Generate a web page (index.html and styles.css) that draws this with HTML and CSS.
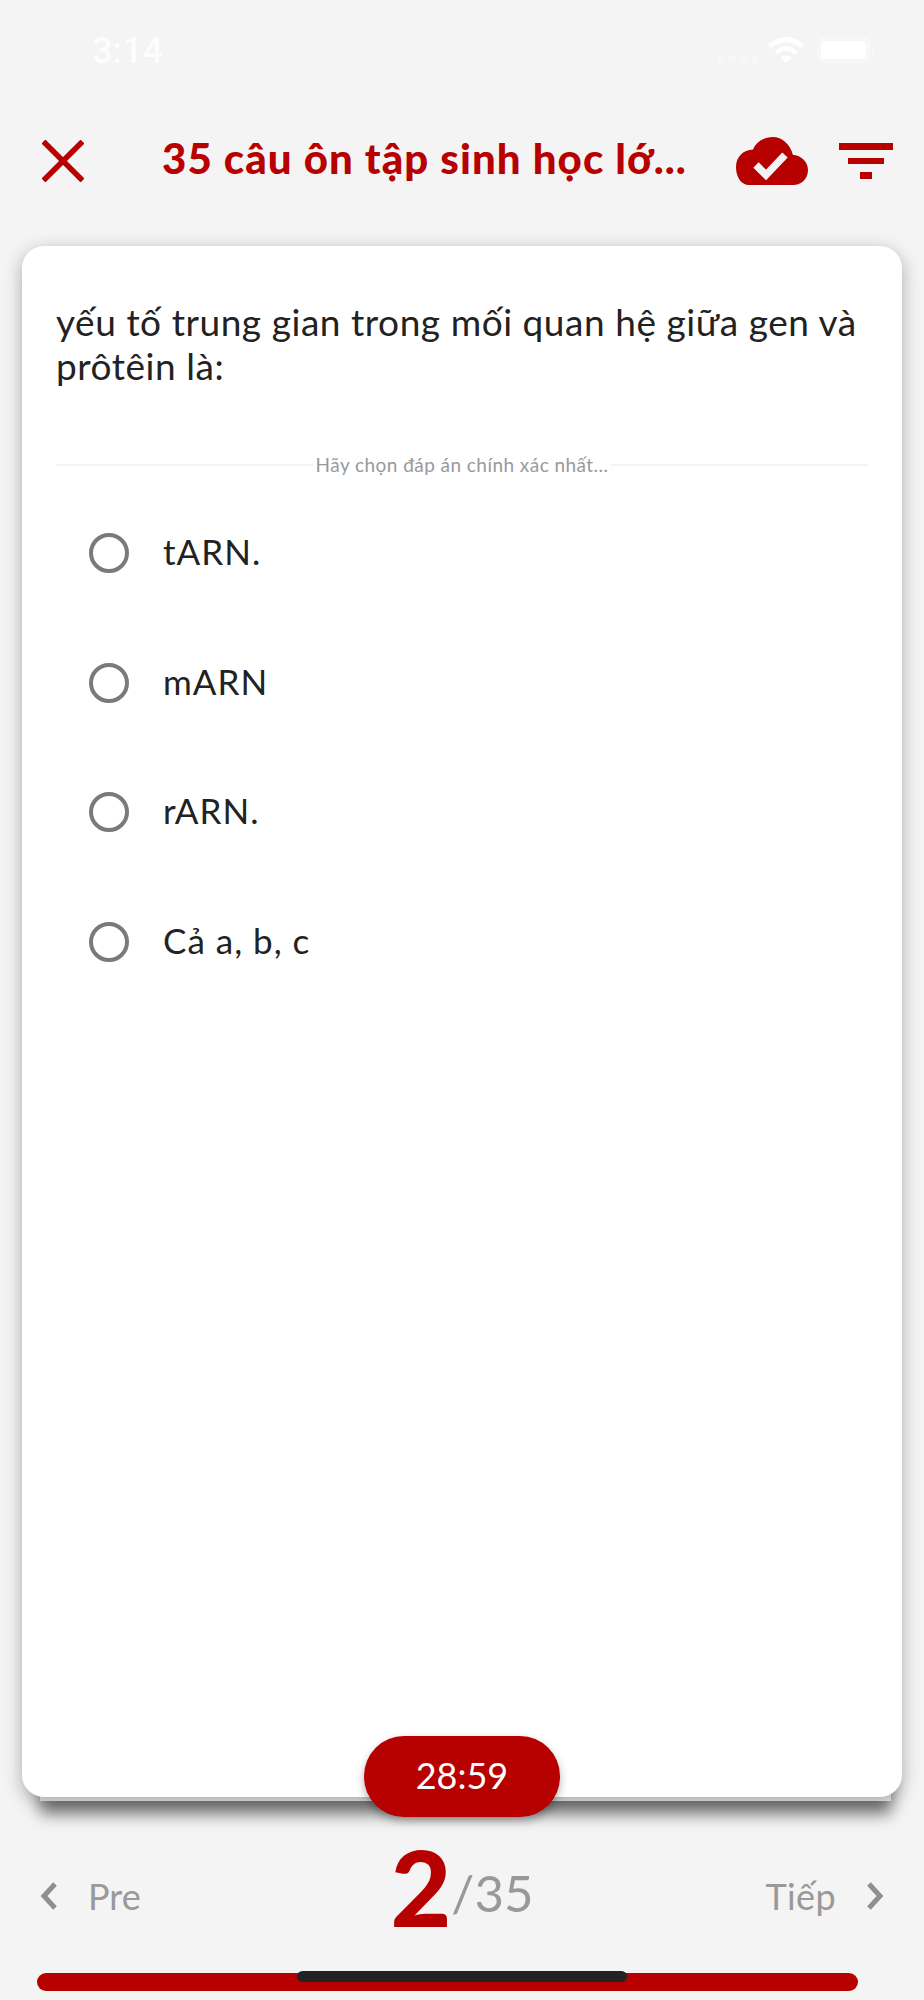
FILE: index.html
```html
<!DOCTYPE html>
<html lang="vi">
<head>
<meta charset="utf-8">
<title>Ôn tập</title>
<link rel="stylesheet" href="styles.css">
</head>
<body>
<div class="status">
  <span class="clock">3:14</span>
  <div class="status-icons">
    <svg class="signal" width="42" height="8" viewBox="0 0 42 8"><circle cx="4" cy="4" r="4"/><circle cx="15" cy="4" r="4"/><circle cx="27" cy="4" r="4"/><circle cx="38" cy="4" r="4"/></svg>
    <svg class="wifi" width="36" height="26" viewBox="0 0 36 26"><path d="M0 8.500C10-2.800 26-2.800 36 8.500L33 11.500C24.500 3 11.500 3 3 11.500Z"/><path d="M6.500 14.500C13.500 7.500 22.500 7.500 29.500 14.500L26.500 17.500C21.500 12.500 14.500 12.500 9.500 17.500Z"/><path d="M12.500 20.500C15.500 17.800 20.500 17.800 23.500 20.500L18 26Z"/></svg>
    <svg class="battery" width="58" height="26" viewBox="0 0 58 26"><rect class="batt-shell" x="1.500" y="1.500" width="50" height="23" rx="6"/><rect class="batt-fill" x="4" y="4" width="45" height="18" rx="3.500"/><path class="batt-tip" d="M55 9C57 10 57 16 55 17Z"/></svg>
  </div>
</div>

<header class="topbar">
  <svg class="close" width="42" height="42" viewBox="0 0 42 42"><path d="M1.500 1.500L40.500 40.500M40.500 1.500L1.500 40.500"/></svg>
  <h1 class="title">35 câu ôn tập sinh học lớ...</h1>
  <svg class="cloud" width="72" height="48" viewBox="0 0 72 48"><path class="cloud-body" d="M13 48C5 48 0 40 0 30C0 20 7 13 17 12.500C20 5 28 0 37 0C46 0 54 7 57 18C65 18 72 25 72 33C72 42 65 48 57 48Z"/><path class="cloud-check" d="M20 28L30 38L49 18"/></svg>
  <div class="funnel"><span class="f1"></span><span class="f2"></span><span class="f3"></span></div>
</header>

<main class="card">
  <p class="question">yếu tố trung gian trong mối quan hệ giữa gen và prôtêin là:</p>
  <div class="hint"><span>Hãy chọn đáp án chính xác nhất...</span></div>
  <ul class="answers">
    <li class="answer"><span class="radio"></span><span class="label">tARN.</span></li>
    <li class="answer"><span class="radio"></span><span class="label">mARN</span></li>
    <li class="answer"><span class="radio"></span><span class="label">rARN.</span></li>
    <li class="answer"><span class="radio"></span><span class="label">Cả a, b, c</span></li>
  </ul>
  <div class="timer">28:59</div>
</main>

<nav class="pager">
  <div class="nav-btn">
    <svg class="chev" width="18" height="28" viewBox="0 0 18 28"><path d="M15 2L4 14L15 26"/></svg>
    <span>Pre</span>
  </div>
  <div class="count"><b>2</b><span>/35</span></div>
  <div class="nav-btn nav-next">
    <span>Tiếp</span>
    <svg class="chev" width="18" height="28" viewBox="0 0 18 28"><path d="M3 2L14 14L3 26"/></svg>
  </div>
</nav>

<div class="progress"><div class="home"></div></div>
</body>
</html>
```
FILE: styles.css
```css
* { box-sizing: border-box; }
html, body { margin: 0; padding: 0; }
body {
  width: 924px;
  height: 2000px;
  background: #f4f4f4;
  font-family: "Lato", "Noto Sans", sans-serif;
  overflow: hidden;
}
.status {
  height: 100px;
  padding: 38px 49px 0 92px;
  display: flex;
  justify-content: space-between;
  align-items: flex-start;
}
.clock {
  font-family: "Roboto", sans-serif;
  font-size: 36px;
  font-weight: 500;
  line-height: 26px;
  color: #fff;
  opacity: .9;
}
.status-icons { display: flex; align-items: flex-start; margin-top: -1px; }
.signal { fill: #f7f7f7; margin: 18px 9px 0 0; }
.wifi { fill: #fff; margin-right: 13px; }
.batt-shell { fill: none; stroke: #f8f8f8; stroke-width: 3; }
.batt-fill { fill: #fff; }
.batt-tip { fill: #f8f8f8; }

.topbar {
  height: 146px;
  padding: 40px 31px 0 42px;
  display: flex;
  align-items: flex-start;
}
.close path { fill: none; stroke: #b70000; stroke-width: 5.500; }
.title {
  margin: -7px 52px 0 78px;
  width: 522px;
  flex: none;
  font-size: 42px;
  line-height: 50px;
  font-weight: 900;
  letter-spacing: 1.050px;
  color: #b70000;
  white-space: nowrap;
}
.cloud { margin-top: -3px; flex: none; }
.cloud-body { fill: #b70000; }
.cloud-check { fill: none; stroke: #f4f4f4; stroke-width: 7.500; }
.funnel {
  margin: 3px 0 0 31px;
  width: 54px;
  display: flex;
  flex-direction: column;
  align-items: center;
  gap: 8px;
}
.funnel span { display: block; height: 6.500px; background: #b70000; }
.f1 { width: 54px; }
.f2 { width: 36px; }
.f3 { width: 12px; }

.card {
  position: relative;
  height: 1551px;
  margin: 0 22px;
  padding: 54px 34px 0;
  background: #fff;
  border-radius: 22px;
  box-shadow: 0 5px 18px rgba(0,0,0,.3);
}
.card::after {
  content: "";
  position: absolute;
  z-index: -1;
  left: 18px;
  right: 11px;
  bottom: -4px;
  height: 40px;
  background: #eee;
  box-shadow: 0 13px 16px rgba(0,0,0,.5);
}
.question {
  margin: 0;
  font-size: 37px;
  line-height: 44px;
  letter-spacing: .55px;
  color: #222;
}
.hint {
  margin-top: 76px;
  height: 2px;
  background: #f3f3f3;
  display: flex;
  justify-content: center;
  align-items: center;
}
.hint span {
  padding: 0 3px;
  background: #fff;
  font-size: 19px;
  line-height: 24px;
  letter-spacing: .45px;
  color: #999;
}
.answers { list-style: none; margin: 22px 0 0; padding: 0 0 0 33px; }
.answer {
  height: 129.700px;
  display: flex;
  align-items: center;
  font-size: 35px;
  letter-spacing: 1px;
  color: #222;
}
.label { margin-top: -4px; }
.radio {
  width: 40px;
  height: 40px;
  margin-right: 34px;
  border: 4px solid #7a7a7a;
  border-radius: 50%;
  flex: none;
}
.timer {
  position: absolute;
  left: 342px;
  bottom: -20px;
  width: 196px;
  height: 81px;
  border-radius: 40px;
  background: #b70000;
  color: #fff;
  font-size: 36px;
  line-height: 79px;
  text-align: center;
  box-shadow: 0 4px 8px rgba(0,0,0,.3);
}

.pager {
  height: 176px;
  padding: 0 40px;
  display: flex;
  justify-content: space-between;
  align-items: flex-start;
  color: #999;
}
.nav-btn {
  flex: 1;
  margin-top: 85px;
  display: flex;
  align-items: center;
  gap: 30px;
  font-size: 36px;
  line-height: 28px;
}
.nav-next { justify-content: flex-end; letter-spacing: .4px; }
.chev path { fill: none; stroke: #8f8f8f; stroke-width: 5; }
.count { margin-top: 34px; height: 110px; line-height: 110px; white-space: nowrap; }
.count b { font-size: 105px; font-weight: 900; color: #b70000; }
.count span { font-size: 51px; vertical-align: 15px; }

.progress {
  position: relative;
  height: 18px;
  margin: 0 66px 0 37px;
  background: #b70000;
  border-radius: 9px;
}
.home {
  position: absolute;
  left: 260px;
  top: -2px;
  width: 330px;
  height: 11px;
  background: #232326;
  border-radius: 6px;
}
```
